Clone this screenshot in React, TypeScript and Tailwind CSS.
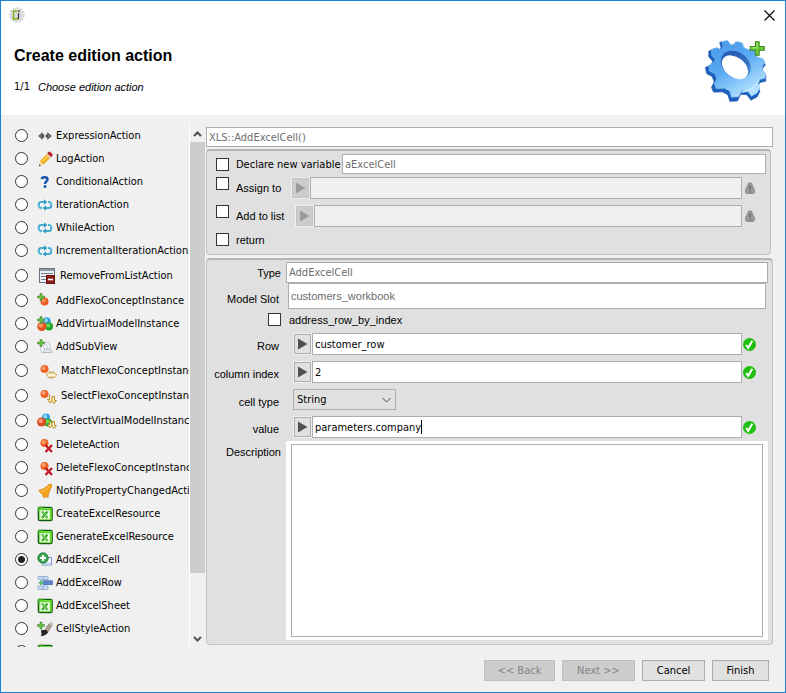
import React, { useState } from "react";

const ui = "font-['DejaVu_Sans_Condensed','DejaVu_Sans',sans-serif]";
const arial = "font-['Liberation_Sans',Arial,sans-serif]";

function ExpressionIcon() {
  return (
    <svg width="16" height="16" viewBox="0 0 16 16" className="shrink-0">
      <path d="M5.500 4.500 1.500 8l4 3.500V9.500H7v-3H5.500zM10.500 4.500l4 3.500-4 3.500V9.500H9v-3h1.500z" fill="#3c4248" stroke="#6d747b" strokeWidth=".6" />
      <path d="M3.500 8H5M11 8h1.500" stroke="#c8ced4" />
    </svg>
  );
}

function PencilIcon() {
  return (
    <svg width="16" height="16" viewBox="0 0 16 16" className="shrink-0">
      <path d="M2 15 3.500 9.500l6.800-7 3.700 3.200-6.500 7z" fill="#f6ab1c" />
      <path d="m5.500 10.500 6-6.500" stroke="#ffd35c" strokeWidth="1.600" />
      <path d="m10 2.500 1.600-1.800h1.600l2.200 2.500v1.500L14 6.200z" fill="#b8242e" />
      <path d="m9.600 2.900 4.200 3.900" stroke="#dfe3e8" strokeWidth="1.200" />
      <path d="m2 15 1.300-4.500 3.300 3z" fill="#f8dcae" />
      <path d="m1.800 15.200.7-2 1.400 1.400z" fill="#333" />
    </svg>
  );
}

function QuestionIcon() {
  return (
    <svg width="16" height="16" viewBox="0 0 16 16" className="shrink-0">
      <path d="M4.800 5.200C5 2.600 10.500 2.400 10.500 5.400c0 2-2.500 2.200-2.500 4.600" fill="none" stroke="#1557a8" strokeWidth="2.500" />
      <rect x="6.700" y="11.200" width="2.600" height="2.600" fill="#1557a8" />
    </svg>
  );
}

function LoopIcon() {
  return (
    <svg width="16" height="16" viewBox="0 0 16 16" className="shrink-0">
      <g fill="none" stroke="#45acd0" strokeWidth="2">
        <path d="M7.500 5H4A2.200 2.200 0 0 0 1.800 7v2A2.200 2.200 0 0 0 4 11h1" />
        <path d="M11 5h1a2.200 2.200 0 0 1 2.200 2v2A2.200 2.200 0 0 1 12 11H8.500" />
      </g>
      <path d="M7 2.200 10.300 5 7 7.800zM9 8.200 5.700 11 9 13.800z" fill="#2d9bc4" />
      <path d="M1.200 9c.2 2 1.200 3 2.800 3M14.800 7c-.2-2-1.200-3-2.800-3" stroke="#9bdcec" strokeWidth="1" fill="none" />
    </svg>
  );
}

function RemoveListIcon() {
  return (
    <svg width="16" height="16" viewBox="0 0 16 16" className="shrink-0">
      <rect x=".5" y=".5" width="15" height="14" fill="#eef1f4" stroke="#66727e" />
      <path d="M1 2h14" stroke="#8f9ba8" strokeWidth="2" />
      <path d="M2 5.500h12M2 8.500h6M2 11.500h5" stroke="#6f7f90" />
      <rect x="7.500" y="7.500" width="8" height="8" fill="#8f1d18" stroke="#6d1210" />
      <path d="M9 11.500h5" stroke="#fff" strokeWidth="1.600" />
    </svg>
  );
}

function Plus({ x, y }: { x: number; y: number }) {
  return (
    <path
      transform={`translate(${x} ${y})`}
      d="M2.500 0h2v2.500H7v2H4.500V7h-2V4.500H0v-2h2.500z"
      fill="#6cbf48"
      stroke="#2f7d24"
      strokeWidth=".5"
    />
  );
}

function Ball({ cx, cy, r, c, hi }: { cx: number; cy: number; r: number; c: string; hi: string }) {
  return (
    <g>
      <circle cx={cx} cy={cy} r={r} fill={c} />
      <circle cx={cx - r * 0.2} cy={cy - r * 0.25} r={r * 0.5} fill={hi} />
    </g>
  );
}

function AddConceptIcon() {
  return (
    <svg width="16" height="16" viewBox="0 0 16 16" className="shrink-0">
      <Ball cx={7.5} cy={8.5} r={4} c="#ef5a22" hi="#ff8f58" />
      <Plus x={0.5} y={0.5} />
    </svg>
  );
}

function AddModelIcon() {
  return (
    <svg width="16" height="16" viewBox="0 0 16 16" className="shrink-0">
      <Ball cx={9.5} cy={5.5} r={4.300} c="#2b9ee0" hi="#8fd9fb" />
      <Ball cx={12} cy={10.5} r={4} c="#25a52f" hi="#6edc5b" />
      <Ball cx={4.800} cy={10.5} r={4.600} c="#e5521e" hi="#ff9a68" />
      <Plus x={0.5} y={0.5} />
    </svg>
  );
}

function AddViewIcon() {
  return (
    <svg width="16" height="16" viewBox="0 0 16 16" className="shrink-0">
      <path d="M3 5 12 3l1.500 8-9 3z" fill="#f7f9fb" stroke="#b5bec8" strokeWidth=".8" />
      <path d="m6 13.500 3-5.500 2 3 1.500-1.500 2.800 4z" fill="#dfe6ec" stroke="#9aa7b4" strokeWidth=".7" />
      <circle cx="8.500" cy="8" r="2" fill="#fff" stroke="#9aa7b4" strokeWidth=".6" />
      <Plus x={0.5} y={0.5} />
    </svg>
  );
}

function MatchIcon() {
  return (
    <svg width="20" height="16" viewBox="0 0 20 16" className="shrink-0">
      <Ball cx={7.500} cy={6} r={4} c="#ee6226" hi="#ff9d6c" />
      <path d="m9.500 12 3.500-3.500V10h3V8.500l3.500 3.500-3.500 3.500V14h-3v1.500z" fill="#fff6cf" stroke="#ad7b12" strokeWidth="1" strokeDasharray="1.600 .5" />
    </svg>
  );
}

function DownArrows() {
  return (
    <path d="M12.500 6.500v5h-2l2.500 3.500 2-3V8.500h2.500v4h2L17 15.500l-2-2.800" fill="#fff6cf" stroke="#b98a1c" strokeWidth="1" />
  );
}

function SelectConceptIcon() {
  return (
    <svg width="20" height="16" viewBox="0 0 20 16" className="shrink-0">
      <Ball cx={7.500} cy={6} r={4} c="#ee6226" hi="#ff9d6c" />
      <DownArrows />
    </svg>
  );
}

function SelectModelIcon() {
  return (
    <svg width="20" height="16" viewBox="0 0 20 16" className="shrink-0">
      <Ball cx={9} cy={4.5} r={4} c="#2b9ee0" hi="#8fd9fb" />
      <Ball cx={11} cy={9.5} r={4} c="#25a52f" hi="#6edc5b" />
      <Ball cx={4.500} cy={9} r={4.500} c="#d94b20" hi="#ff9a78" />
      <DownArrows />
    </svg>
  );
}

function DeleteIcon() {
  return (
    <svg width="16" height="16" viewBox="0 0 16 16" className="shrink-0">
      <Ball cx={7.500} cy={6} r={4} c="#ee6226" hi="#ff9d6c" />
      <path d="m8.500 8 6.500 7M15 8l-6.500 7" stroke="#c11d28" strokeWidth="2.400" />
    </svg>
  );
}

function BellIcon() {
  return (
    <svg width="16" height="16" viewBox="0 0 16 16" className="shrink-0">
      <path d="M1.500 7.500C6 6.500 9 4.500 12 1.500l2.500-.5v3C12.500 7.500 11.500 10 11 14.500l-2-1-2 1.500-1.500-3.500z" fill="#f4a321" stroke="#d98b17" strokeWidth=".8" />
      <path d="M4 8.500C7.500 7.500 10 5.500 12 3.500" stroke="#ffc861" strokeWidth="1" fill="none" />
    </svg>
  );
}

function ExcelIcon() {
  return (
    <svg width="16" height="16" viewBox="0 0 16 16" className="shrink-0">
      <rect x="1.500" y="1.500" width="13.500" height="13" rx="1.500" fill="#f2fdea" stroke="#135c14" strokeWidth="1.600" />
      <path d="M2.500 3.200h11.300v10.300" fill="none" stroke="#5fdc22" strokeWidth="2" />
      <path d="M2.800 4v9.500H13" fill="none" stroke="#8be052" strokeWidth="1" />
      <path d="m5 5.500 5.500 6.500M10.500 5.500 5 12" stroke="#3cab2e" strokeWidth="2.200" />
      <path d="m5.500 6 4.500 5.500" stroke="#c4f2a8" strokeWidth=".7" />
      <path d="M1 1.500h5.500M1.500 1v4.500" stroke="#39a32a" strokeWidth="1.500" />
    </svg>
  );
}

function AddCellIcon() {
  return (
    <svg width="16" height="16" viewBox="0 0 16 16" className="shrink-0">
      <path d="M7 5.500h7.500v7.500H4.500" fill="#eef4ff" stroke="#7c98c8" />
      <path d="M5 11.700h8.800" stroke="#c3d5f2" strokeWidth="1.500" />
      <circle cx="6" cy="6" r="5.200" fill="#3ba552" stroke="#1d7a35" strokeWidth=".9" />
      <path d="M6 3v6M3 6h6" stroke="#fff" strokeWidth="2" />
    </svg>
  );
}

function AddRowIcon() {
  return (
    <svg width="16" height="16" viewBox="0 0 16 16" className="shrink-0">
      <path d="M1 1.500h10v3H1zM1 11h10v3.500H1z" fill="#c8dcf4" stroke="#9fb4d2" />
      <path d="M6 1.500v3M6 11v3.500" stroke="#8fa8cc" />
      <rect x="6" y="5.800" width="9.500" height="3.800" fill="#5f86cf" stroke="#3f62ad" strokeWidth=".7" />
      <path d="M4 5.300v5M1.500 7.800h5" stroke="#5cbb68" strokeWidth="1.800" />
    </svg>
  );
}

function StyleIcon() {
  return (
    <svg width="16" height="16" viewBox="0 0 16 16" className="shrink-0">
      <path d="m7.500 9.500 4.500-6.500 3 .8-4.500 7.700z" fill="#b7a48c" stroke="#6d6255" strokeWidth=".7" />
      <path d="m12 3 1.500-1.500 2 1L15 5z" fill="#e8e4dc" stroke="#77706a" strokeWidth=".5" />
      <path d="M4 9h5.500l1.500 2.300c-1 2-3 3.700-7.500 3.700 1.500-1 1.200-2 .8-3z" fill="#26282b" />
      <Plus x={0.500} y={1} />
    </svg>
  );
}

type Row = { label: string; icon: () => React.ReactElement; kind?: "large" | "wide" };

const ROWS: Row[] = [
  { label: "ExpressionAction", icon: ExpressionIcon },
  { label: "LogAction", icon: PencilIcon },
  { label: "ConditionalAction", icon: QuestionIcon },
  { label: "IterationAction", icon: LoopIcon },
  { label: "WhileAction", icon: LoopIcon },
  { label: "IncrementalIterationAction", icon: LoopIcon },
  { label: "RemoveFromListAction", icon: RemoveListIcon, kind: "large" },
  { label: "AddFlexoConceptInstance", icon: AddConceptIcon },
  { label: "AddVirtualModelInstance", icon: AddModelIcon },
  { label: "AddSubView", icon: AddViewIcon },
  { label: "MatchFlexoConceptInstance", icon: MatchIcon, kind: "wide" },
  { label: "SelectFlexoConceptInstance", icon: SelectConceptIcon, kind: "wide" },
  { label: "SelectVirtualModelInstance", icon: SelectModelIcon, kind: "wide" },
  { label: "DeleteAction", icon: DeleteIcon },
  { label: "DeleteFlexoConceptInstance", icon: DeleteIcon },
  { label: "NotifyPropertyChangedAction", icon: BellIcon },
  { label: "CreateExcelResource", icon: ExcelIcon },
  { label: "GenerateExcelResource", icon: ExcelIcon },
  { label: "AddExcelCell", icon: AddCellIcon },
  { label: "AddExcelRow", icon: AddRowIcon },
  { label: "AddExcelSheet", icon: ExcelIcon },
  { label: "CellStyleAction", icon: StyleIcon },
  { label: "SelectExcelSheet", icon: ExcelIcon },
];

const ROW_STYLE = {
  normal: "h-[23px] gap-[3px]",
  large: "h-[27px] gap-[5px] pl-[2px]",
  wide: "h-[25px] gap-[4px]",
};

function ActionList() {
  const [selected, setSelected] = useState("AddExcelCell");
  return (
    <div className="w-[175px] shrink-0 overflow-hidden border-r border-white">
      {ROWS.map(({ label, icon: Icon, kind }) => (
        <label key={label} className="flex items-center whitespace-nowrap">
          <input
            type="radio"
            name="action"
            checked={selected === label}
            onChange={() => setSelected(label)}
            className="mr-[9px] size-[13px] shrink-0 appearance-none rounded-full border border-[#333] bg-white checked:bg-[radial-gradient(circle,#222_3px,#fff_4px)]"
          />
          <span className={`flex items-center ${ROW_STYLE[kind ?? "normal"]}`}>
            <Icon />
            <span>{label}</span>
          </span>
        </label>
      ))}
    </div>
  );
}

function ScrollBar() {
  return (
    <div className="flex w-[15px] shrink-0 flex-col bg-[#f0f0f0] pt-px">
      <button type="button" aria-label="Scroll up" className="flex h-[17px] shrink-0 items-center justify-center">
        <svg width="9" height="6" viewBox="0 0 9 6"><path d="m1 5 3.500-3.500L8 5" fill="none" stroke="#505050" strokeWidth="2" /></svg>
      </button>
      <div className="grow-[431] basis-0 bg-[#cdcdcd]" />
      <div className="grow-[57] basis-0" />
      <button type="button" aria-label="Scroll down" className="flex h-[17px] shrink-0 items-center justify-center">
        <svg width="9" height="6" viewBox="0 0 9 6"><path d="m1 1 3.500 3.500L8 1" fill="none" stroke="#505050" strokeWidth="2" /></svg>
      </button>
    </div>
  );
}

const checkbox = "size-[13px] shrink-0 appearance-none border border-[#333] bg-white checked:bg-[#333]";
const field = "min-w-0 border border-[#abadb3] bg-white outline-none disabled:bg-[#f0f0f0]";
const panel = "rounded-[4px] border border-t-2 border-[#c3c3c3] border-t-[#b4b4b4] bg-[#e0e0e0]";

function PlayButton({ label, disabled }: { label: string; disabled?: boolean }) {
  return (
    <button
      type="button"
      aria-label={label}
      disabled={disabled}
      className="flex h-[22px] w-[19px] shrink-0 items-center justify-center border border-[#f0f0f0] bg-[#adadad] p-px disabled:bg-[#c4c4c4]"
    >
      <span className={`flex h-full w-full items-center justify-center ${disabled ? "bg-[#cccccc]" : "bg-[#e1e1e1]"}`}>
        <svg width="11" height="12" viewBox="0 0 11 12"><path d="M1 .5 10.500 6 1 11.500z" fill={disabled ? "#9b9b9b" : "#505050"} /></svg>
      </span>
    </button>
  );
}

function WarnIcon() {
  return (
    <svg width="10" height="12" viewBox="0 0 10 12" className="ml-[3px] shrink-0">
      <path d="M3.500 1h3l1 3 2 3.500v3l-1 1h-7l-1-1v-3l2-3.500z" fill="#999" stroke="#858585" strokeWidth=".8" />
      <path d="M5 3.500v4M5 9v1.500" stroke="#666" strokeWidth="1.500" />
    </svg>
  );
}

function OkIcon() {
  return (
    <svg width="13" height="13" viewBox="0 0 13 13" className="ml-px shrink-0">
      <circle cx="6.500" cy="6.500" r="6.500" fill="#1fbf0f" />
      <path d="m3.200 7 2 2.800L9.300 2.800" fill="none" stroke="#fff" strokeWidth="2" />
    </svg>
  );
}

function Binding({ id, label, value, caret }: { id: string; label: string; value: string; caret?: boolean }) {
  const [text, setText] = useState(value);
  return (
    <div className="flex h-[28px] shrink-0 items-center">
      <label htmlFor={id} className={`w-[72px] shrink-0 pt-[3px] text-right ${arial}`}>{label}</label>
      <div className="ml-[14px] flex min-w-0 flex-1 items-center pr-[12px]">
        <PlayButton label={`Browse ${label}`} />
        <div className="relative flex min-w-0 flex-1">
          <input id={id} value={text} onChange={(e) => setText(e.target.value)} className={`${field} h-[22px] flex-1 px-[2px]`} />
          {caret && <span className="absolute top-[4px] left-[109px] h-[14px] w-px bg-black" />}
        </div>
        <OkIcon />
      </div>
    </div>
  );
}

function Assignment() {
  return (
    <section className={`${panel} mr-[2px] h-[106px] shrink-0 pt-[3px] pr-[4px] pl-[9px]`}>
      <div className="flex h-[20px] items-center">
        <input id="declare" type="checkbox" className={checkbox} />
        <label htmlFor="declare" className="ml-[7px] w-[106px] shrink-0 pt-[2px] whitespace-nowrap">Declare new variable</label>
        <input aria-label="Variable name" defaultValue="aExcelCell" className={`${field} h-[20px] flex-1 px-[2px] text-[#6d6d6d]`} />
      </div>
      <div className="mt-[3px] flex h-[22px] items-start pr-[11px]">
        <input id="assign" type="checkbox" className={checkbox} />
        <label htmlFor="assign" className={`ml-[7px] w-[55px] shrink-0 pt-[4px] ${arial}`}>Assign to</label>
        <PlayButton label="Browse target" disabled />
        <input aria-label="Assign to" disabled className={`${field} h-[22px] flex-1`} />
        <span className="self-center"><WarnIcon /></span>
      </div>
      <div className="mt-[6px] flex h-[22px] items-start pr-[11px]">
        <input id="addlist" type="checkbox" className={checkbox} />
        <label htmlFor="addlist" className={`ml-[7px] w-[59px] shrink-0 pt-[4px] ${arial}`}>Add to list</label>
        <PlayButton label="Browse list" disabled />
        <input aria-label="Add to list" disabled className={`${field} h-[22px] flex-1`} />
        <span className="self-center"><WarnIcon /></span>
      </div>
      <div className="mt-[6px] flex h-[13px] items-center">
        <input id="return" type="checkbox" className={checkbox} />
        <label htmlFor="return" className={`ml-[7px] ${arial}`}>return</label>
      </div>
    </section>
  );
}

function Parameters() {
  return (
    <section className={`${panel} mt-[3px] flex min-h-0 flex-1 flex-col pt-[2px] pr-[4px] pb-[4px]`}>
      <div className="flex h-[21px] shrink-0 items-center">
        <label htmlFor="type" className={`w-[74px] shrink-0 text-right ${arial}`}>Type</label>
        <input id="type" defaultValue="AddExcelCell" className={`${field} ml-[5px] h-[21px] flex-1 px-[2px] text-[#6d6d6d]`} />
      </div>
      <div className="flex h-[26px] shrink-0 items-center">
        <label htmlFor="slot" className={`w-[72px] shrink-0 pt-[6px] text-right ${arial}`}>Model Slot</label>
        <input id="slot" defaultValue="customers_workbook" className={`${field} mr-[2px] ml-[9px] h-[26px] flex-1 px-[2px] text-[#6d6d6d] ${arial}`} />
      </div>
      <div className="flex h-[21px] shrink-0 items-center pt-px pl-[61px]">
        <input id="byindex" type="checkbox" className={`${checkbox} mb-[2px]`} />
        <label htmlFor="byindex" className={`ml-[8px] ${arial}`}>address_row_by_index</label>
      </div>
      <Binding id="row" label="Row" value="customer_row" />
      <Binding id="column" label="column index" value="2" />
      <div className="flex h-[27px] shrink-0 items-center">
        <label htmlFor="celltype" className={`w-[72px] shrink-0 pt-[5px] text-right ${arial}`}>cell type</label>
        <div className="relative ml-[14px] h-[21px] w-[103px]">
          <select id="celltype" className="h-full w-full appearance-none border border-[#adadad] bg-[#e1e1e1] pl-[3px] outline-none">
            <option>String</option>
          </select>
          <svg width="9" height="6" viewBox="0 0 9 6" className="pointer-events-none absolute top-[8px] right-[5px]">
            <path d="m.5 1 4 4 4-4" fill="none" stroke="#444" />
          </svg>
        </div>
      </div>
      <Binding id="value" label="value" value="parameters.company" caret />
      <div className="flex min-h-0 flex-1">
        <label htmlFor="description" className={`w-[74px] shrink-0 pt-[4px] text-right ${arial}`}>Description</label>
        <div className="ml-[5px] flex min-w-0 flex-1 bg-white px-[5px] py-[3px]">
          <textarea id="description" className={`${field} flex-1 resize-none`} />
        </div>
      </div>
    </section>
  );
}

const GEAR =
  "M88 130 106 126 115 139 128 138 136 129 152 134 156 148 170 154 184 152 196 162 194 174 204 180 216 182 222 196 214 206 214 218 224 228 223 244 206 248 200 258 206 274 198 290 180 300 168 284 150 282 140 302 118 303 112 284 96 275 82 276 70 276 64 262 72 246 66 230 50 222 46 204 62 196 68 186 56 172 56 156 72 148 84 154 92 146Z";

function Gear() {
  return (
    <svg width="64" height="64" viewBox="39 120 188 188">
      <defs>
        <linearGradient id="gearFace" x1="0" y1="0" x2=".6" y2="1">
          <stop offset="0" stopColor="#4a98e8" />
          <stop offset=".5" stopColor="#58a8f2" />
          <stop offset="1" stopColor="#b4e2ff" />
        </linearGradient>
        <linearGradient id="gearHole" x1="0" y1="0" x2="1" y2="1">
          <stop offset="0" stopColor="#1a4aa5" />
          <stop offset="1" stopColor="#5ba9ef" />
        </linearGradient>
      </defs>
      <path d={GEAR} fill="#1c5fbd" stroke="#1b57ae" strokeWidth="2" strokeLinejoin="round" />
      <path d={GEAR} transform="translate(12 6) scale(.94)" fill="url(#gearFace)" stroke="#7fc0f8" strokeWidth="2" strokeLinejoin="round" />
      <path d="M152 276c20-2 42-14 52-34" fill="none" stroke="#c8ebff" strokeWidth="4" />
      <ellipse cx="135" cy="196" rx="48" ry="37" transform="rotate(38 135 196)" fill="url(#gearHole)" />
      <ellipse cx="133" cy="203" rx="43" ry="29" transform="rotate(38 133 203)" fill="#fff" />
      <path d="M193 128h11v14h15v11h-15v15h-11v-15h-15v-11h15z" fill="#6cc63a" stroke="#388c1f" strokeWidth="3" />
      <path d="M198 131v14M181 146h16" stroke="#abe67f" strokeWidth="3" />
    </svg>
  );
}

function AppIcon() {
  return (
    <svg width="16" height="16" viewBox="0 0 16 16">
      <circle cx="8" cy="8" r="6.600" fill="#dcdcdc" />
      <circle cx="8" cy="8" r="7" fill="none" stroke="#cfcfcf" strokeWidth="1.600" strokeDasharray="2 1.600" />
      <path d="M8.500 4H4.500v8h4v-1.500" fill="none" stroke="#7fae1c" strokeWidth="1.500" />
      <path d="M9.500 6v6M9 4.200h2" stroke="#34404e" strokeWidth="1.300" />
    </svg>
  );
}

const button =
  "h-[21px] border border-[#adadad] bg-[#e1e1e1] text-black disabled:border-[#bfbfbf] disabled:bg-[#cccccc] disabled:text-[#838383]";

export default function App() {
  return (
    <main className={`flex h-screen flex-col border border-[#1883d7] bg-[#f0f0f0] text-[11px] leading-[14px] text-black ${ui}`}>
      <header className="h-[114px] shrink-0 bg-white">
        <div className="flex justify-between pt-[6px] pr-[10px] pl-[8px]">
          <AppIcon />
          <button type="button" aria-label="Close" className="mt-[3px] size-[11px]">
            <svg width="11" height="11" viewBox="0 0 11 11"><path d="m.5.500 10 10M10.500.500l-10 10" stroke="#000" strokeWidth="1.100" /></svg>
          </button>
        </div>
        <div className="flex justify-between pr-[18px] pl-[13px]">
          <div className="pt-[23px]">
            <h1 className={`text-base leading-5 font-bold ${arial}`}>Create edition action</h1>
            <p className="mt-[14px] flex gap-[8px]">
              <span>1/1</span>
              <em className={arial}>Choose edition action</em>
            </p>
          </div>
          <div className="pt-[16px]"><Gear /></div>
        </div>
      </header>
      <div className="mt-[9px] flex min-h-0 flex-1 pr-[12px] pl-[14px]">
        <ActionList />
        <ScrollBar />
        <form className="flex min-w-0 flex-1 flex-col pt-[3px] pb-[2px] pl-px">
          <input aria-label="Expression" defaultValue="XLS::AddExcelCell()" className={`${field} mb-[2px] h-[20px] shrink-0 px-[2px] text-[#6d6d6d]`} />
          <Assignment />
          <Parameters />
        </form>
      </div>
      <footer className="mt-[13px] mb-[11px] flex shrink-0 justify-end gap-[7px] pr-[16px]">
        <button type="button" disabled className={`${button} w-[71px]`}>&lt;&lt; Back</button>
        <button type="button" disabled className={`${button} w-[73px]`}>Next &gt;&gt;</button>
        <button type="button" className={`${button} w-[63px]`}>Cancel</button>
        <button type="button" className={`${button} w-[57px]`}>Finish</button>
      </footer>
    </main>
  );
}
